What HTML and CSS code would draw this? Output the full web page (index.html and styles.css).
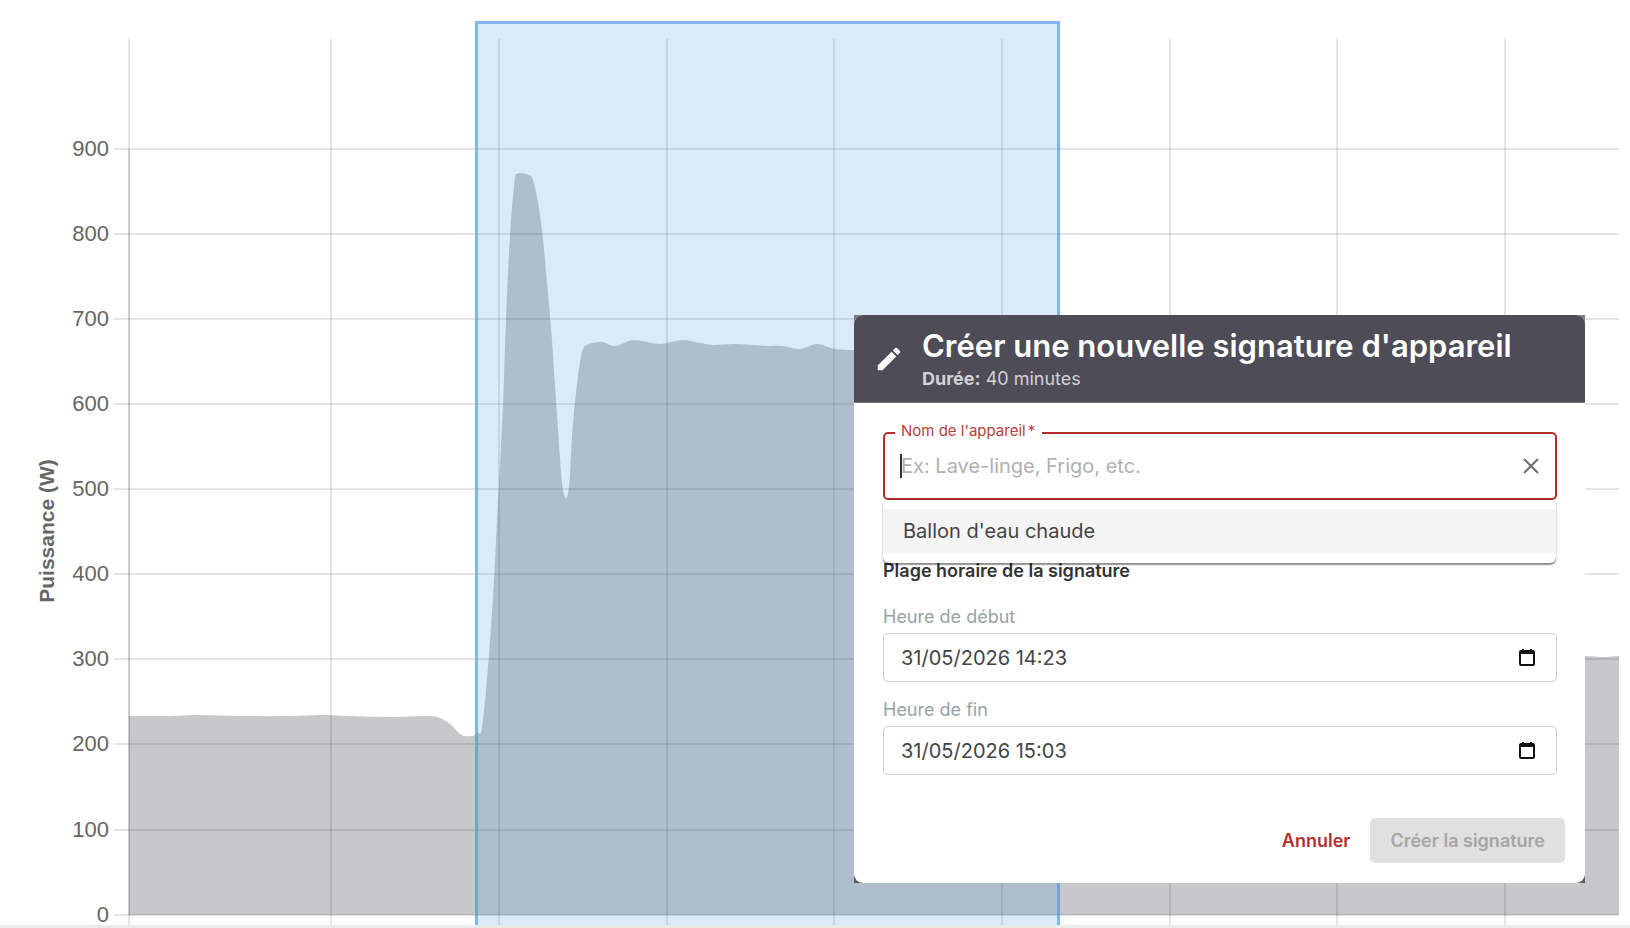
FILE: index.html
```html
<!DOCTYPE html>
<html lang="fr">
<head>
    <meta charset="UTF-8">
    <meta name="viewport" content="width=device-width, initial-scale=1.0">
    <title>Signature d'appareil</title>
    <link rel="stylesheet" href="styles.css">
</head>
<body>

    <main class="page">
        <svg class="chart" id="chart" viewBox="0 0 1630 925" role="img" aria-label="Puissance (W)">
            <path class="area" id="area" />
            <g id="grid"></g>
            <text class="axis-title" transform="translate(54 531) rotate(-90)">Puissance (W)</text>
            <rect class="selection" x="475" y="21" width="585" height="904" />
            <path class="selection-border" d="M476.500 925V22.500H1058.500V925" />
        </svg>

        <div class="modal-backdrop">
            <form class="modal">
                <header class="modal-header">
                    <svg class="edit-icon" viewBox="0 0 24 24" aria-hidden="true">
                        <path d="M3 17.250V21h3.750L17.810 9.940l-3.750-3.750L3 17.250zM20.710 7.040c.39-.39.39-1.020 0-1.410l-2.340-2.340c-.39-.39-1.020-.39-1.410 0l-1.830 1.830 3.750 3.750 1.830-1.830z" />
                    </svg>
                    <div>
                        <h1 class="title">Créer une nouvelle signature d'appareil</h1>
                        <p class="subtitle"><strong>Durée:</strong> 40 minutes</p>
                    </div>
                </header>

                <div class="modal-body">
                    <div class="name-field">
                        <label class="name-label" for="name">Nom de l'appareil<span class="star">*</span></label>
                        <input class="name-input" type="text" id="name" placeholder="Ex: Lave-linge, Frigo, etc." autocomplete="off">
                        <span class="caret"></span>
                        <button class="icon-btn" type="button" aria-label="Effacer">
                            <svg class="clear-icon" viewBox="0 0 16 16"><path d="M1 1l14 14M15 1L1 15" /></svg>
                        </button>
                        <ul class="suggestions" role="listbox">
                            <li class="suggestion" role="option">Ballon d'eau chaude</li>
                        </ul>
                    </div>

                    <h2 class="section-title">Plage horaire de la signature</h2>

                    <label class="time-label" for="start">Heure de début</label>
                    <div class="time-field">
                        <input class="time-input" type="text" id="start" value="31/05/2026 14:23">
                        <button class="icon-btn" type="button" aria-label="Choisir le début">
                            <svg class="calendar-icon" viewBox="0 0 16 17"><path d="M2 1h1V0h2v1h6V0h2v1h1a2 2 0 0 1 2 2v12a2 2 0 0 1-2 2H2a2 2 0 0 1-2-2V3a2 2 0 0 1 2-2zM2 5v10h12V5z" /></svg>
                        </button>
                    </div>

                    <label class="time-label" for="end">Heure de fin</label>
                    <div class="time-field">
                        <input class="time-input" type="text" id="end" value="31/05/2026 15:03">
                        <button class="icon-btn" type="button" aria-label="Choisir la fin">
                            <svg class="calendar-icon" viewBox="0 0 16 17"><path d="M2 1h1V0h2v1h6V0h2v1h1a2 2 0 0 1 2 2v12a2 2 0 0 1-2 2H2a2 2 0 0 1-2-2V3a2 2 0 0 1 2-2zM2 5v10h12V5z" /></svg>
                        </button>
                    </div>
                </div>

                <footer class="modal-footer">
                    <button class="cancel-btn" type="button">Annuler</button>
                    <button class="create-btn" type="submit" disabled>Créer la signature</button>
                </footer>
            </form>
        </div>
    </main>

    <script src="script.js"></script>
</body>
</html>
```

FILE: styles.css
```css
* {
    box-sizing: border-box;
}

body {
    margin: 0;
    background-color: #fff;
    font-family: Inter, "Open Sans", sans-serif;
    color: #444;
}

.page {
    position: relative;
    border-bottom: 3px solid #ebebeb;
}

/* Chart */
.chart {
    display: block;
    width: 100%;
    height: auto;
    overflow: visible;
    font-family: "Liberation Sans", Arial, sans-serif;
    font-size: 22px;
}

.area {
    fill: #c8c8ca;
}

.grid-line {
    stroke: #000;
    stroke-opacity: 0.1;
    stroke-width: 2;
}

.tick {
    fill: #666;
    text-anchor: end;
}

.axis-title {
    fill: #666;
    font-size: 21px;
    font-weight: bold;
    text-anchor: middle;
}

.selection {
    fill: #4698e8;
    fill-opacity: 0.2;
}

.selection-border {
    fill: none;
    stroke: #4a90ee;
    stroke-opacity: 0.6;
    stroke-width: 3;
}

/* Modal */
.modal-backdrop {
    position: absolute;
    top: 315px;
    right: 45px;
    width: 731px;
    background: linear-gradient(#7c7e7c 50%, #5b5b5c 50%);
}

.modal {
    background-color: #fff;
    border-radius: 9px;
    overflow: hidden;
}

.modal-header {
    display: flex;
    align-items: center;
    gap: 18px;
    height: 88px;
    padding: 0 20px;
    background-color: #4e4c56;
    border-bottom: 1px solid #77757d;
    color: #fff;
}

.edit-icon {
    width: 30px;
    height: 30px;
    flex: none;
    fill: #fff;
}

.title {
    margin: 0;
    font-size: 31px;
    line-height: 40px;
    font-weight: 600;
    white-space: nowrap;
}

.subtitle {
    margin: 0;
    font-size: 18px;
    line-height: 26px;
    color: #d3d2d5;
}

.modal-body {
    padding: 29px 28px 0 29px;
}

.name-field {
    position: relative;
    display: flex;
    align-items: center;
    height: 68px;
    margin: 0 0 59px;
    padding: 0 12px 0 16px;
    border: 2px solid #b32f2b;
    border-radius: 5px;
}

.name-label {
    position: absolute;
    top: -13px;
    left: 10px;
    padding: 0 7px 0 6px;
    background-color: #fff;
    color: #b8403c;
    font-size: 15px;
    line-height: 20px;
}

.star {
    margin-left: 2px;
}

.name-input, .time-input {
    flex: 1;
    min-width: 0;
    padding: 0;
    border: none;
    outline: none;
    background: none;
    font-family: inherit;
    font-size: 20px;
    color: #444;
}

.name-input::placeholder {
    color: #b0b0b0;
}

/* text cursor of the active field */
.caret {
    position: absolute;
    top: 20px;
    left: 15px;
    width: 2px;
    height: 24px;
    background-color: #333;
}

.icon-btn {
    display: flex;
    align-items: center;
    justify-content: center;
    width: 24px;
    height: 24px;
    padding: 0;
    border: none;
    background: none;
    cursor: pointer;
}

.clear-icon {
    width: 16px;
    height: 16px;
    stroke: #6e6e6e;
    stroke-width: 2;
    fill: none;
}

.calendar-icon {
    width: 16px;
    height: 17px;
    fill: #111;
}

.suggestions {
    position: absolute;
    top: 100%;
    left: -2px;
    right: -1px;
    margin: 2px 0 0;
    padding: 9px 0 10px;
    list-style: none;
    background-color: #fff;
    border-radius: 0 0 6px 6px;
    box-shadow: 0 2px 1px rgba(0, 0, 0, 0.35), 0 1px 3px rgba(0, 0, 0, 0.2);
}

.suggestion {
    padding: 0 20px;
    background-color: #f4f4f4;
    font-size: 20px;
    line-height: 44px;
}

.section-title {
    margin: 0 0 22px;
    font-size: 18px;
    line-height: 24px;
    font-weight: 600;
    color: #333;
}

.time-label {
    display: block;
    margin-bottom: 4px;
    font-size: 18px;
    line-height: 24px;
    color: #95a5a6;
}

.time-field {
    display: flex;
    align-items: center;
    height: 49px;
    margin-bottom: 16px;
    padding: 0 17px;
    border: 1px solid #d0d0d0;
    border-radius: 5px;
}

.modal-footer {
    display: flex;
    justify-content: flex-end;
    padding: 27px 20px 20px;
}

.cancel-btn, .create-btn {
    height: 45px;
    padding: 0 20px;
    border: none;
    border-radius: 5px;
    font-family: inherit;
    font-size: 18px;
    font-weight: 600;
    cursor: pointer;
    white-space: nowrap;
}

.cancel-btn {
    background: none;
    color: #b32f2b;
}

.create-btn {
    background-color: #e0e0e0;
    color: #a6a6a6;
    cursor: default;
}
```

FILE: script.js
```js
const SVG_NS = 'http://www.w3.org/2000/svg';
const plot = { left: 129, right: 1619, top: 39, zero: 915, bottom: 925 };
const timeLines = [129, 331, 499, 667, 834, 1002, 1170, 1337, 1505];
const powerLines = [915, 830, 744, 659, 574, 489, 404, 319, 234, 149];

// x, y positions of the power curve
const points = [
    [129, 716], [170, 716], [197, 715], [240, 716], [290, 716], [320, 715], [350, 716], [390, 717],
    [429, 716], [440, 718], [450, 724], [460, 734], [465, 736], [472, 736], [478, 733], [482, 728],
    [489, 655], [494, 580], [497, 520], [499, 485], [503, 404], [506, 320], [510, 235], [515, 178],
    [517, 174], [521, 173], [526, 174], [531, 176], [533, 180], [537, 197], [542, 230], [548, 293],
    [552, 340], [556, 400], [559, 445], [562, 483], [564, 494], [566, 498], [568, 494], [570, 475],
    [572, 437], [576, 393], [580, 362], [583, 349], [587, 345], [593, 343], [602, 342], [615, 346],
    [633, 340], [660, 344], [683, 340], [700, 343], [713, 345], [735, 344], [768, 346], [782, 346],
    [800, 349], [817, 344], [835, 349], [853, 350], [1100, 360], [1150, 640], [1560, 655],
    [1585, 656], [1605, 657], [1619, 656]
];

function add(parent, tag, attrs, text) {
    const el = document.createElementNS(SVG_NS, tag);
    for (const key in attrs) {
        el.setAttribute(key, attrs[key]);
    }
    if (text !== undefined) {
        el.textContent = text;
    }
    parent.appendChild(el);
}

function drawGrid() {
    const grid = document.getElementById('grid');
    timeLines.forEach(x => {
        add(grid, 'line', { class: 'grid-line', x1: x, x2: x, y1: plot.top, y2: plot.bottom });
    });
    powerLines.forEach((y, i) => {
        add(grid, 'line', { class: 'grid-line', x1: 114, x2: plot.right, y1: y, y2: y });
        add(grid, 'text', { class: 'tick', x: 109, y: y + 7 }, i * 100);
    });
    // axis line
    add(grid, 'line', { class: 'grid-line', x1: plot.left, x2: plot.left, y1: 149, y2: plot.zero });
}

function drawArea() {
    let d = `M${points[0]}`;
    for (let i = 0; i < points.length - 1; i++) {
        const [x0, y0] = points[Math.max(i - 1, 0)];
        const [x1, y1] = points[i];
        const [x2, y2] = points[i + 1];
        const [x3, y3] = points[Math.min(i + 2, points.length - 1)];
        const third = (x2 - x1) / 3;
        const m1 = (y2 - y0) / (x2 - x0);
        const m2 = (y3 - y1) / (x3 - x1);
        d += `C${x1 + third},${y1 + m1 * third} ${x2 - third},${y2 - m2 * third} ${x2},${y2}`;
    }
    d += `V${plot.zero}H${plot.left}Z`;
    document.getElementById('area').setAttribute('d', d);
}

drawGrid();
drawArea();
```
